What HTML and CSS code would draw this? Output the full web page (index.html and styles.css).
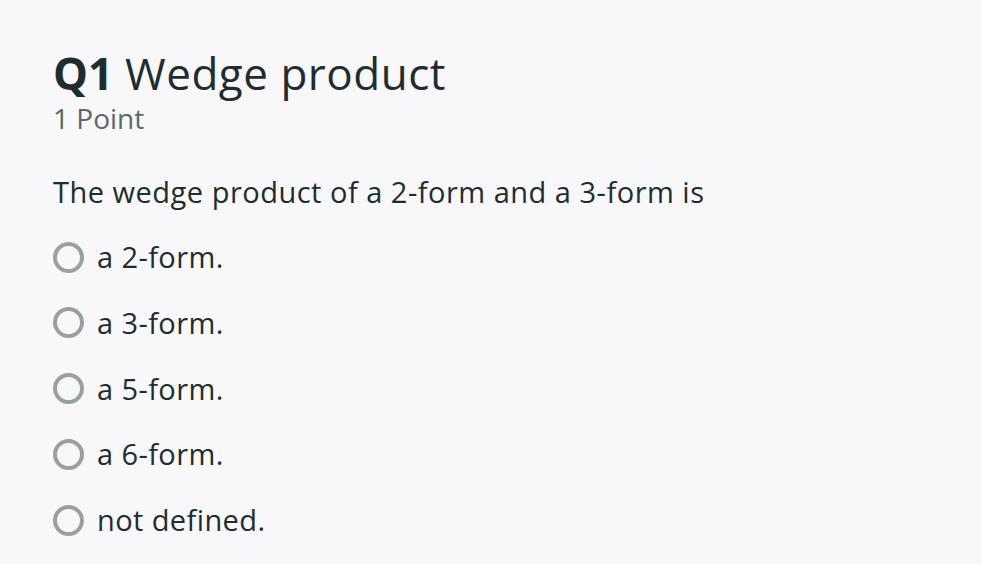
FILE: index.html
```html
<!DOCTYPE html>
<html>
<head>
<meta charset="utf-8">
<link rel="stylesheet" href="styles.css">
</head>
<body>
<main class="question">
  <header class="q-head">
    <h1 class="q-title"><span class="q-num">Q1</span> Wedge product</h1>
    <div class="q-points">1 Point</div>
  </header>
  <p class="q-prompt">The wedge product of a 2-form and a 3-form is</p>
  <ul class="options">
    <li class="option"><span class="radio"></span><span class="label">a 2-form.</span></li>
    <li class="option"><span class="radio"></span><span class="label">a 3-form.</span></li>
    <li class="option"><span class="radio"></span><span class="label">a 5-form.</span></li>
    <li class="option"><span class="radio"></span><span class="label">a 6-form.</span></li>
    <li class="option"><span class="radio"></span><span class="label">not defined.</span></li>
  </ul>
</main>
</body>
</html>
```
FILE: styles.css
```css
html, body {
  margin: 0;
  padding: 0;
  background: #f8f8fa;
}
body {
  font-family: "Open Sans", "Lato", sans-serif;
  color: #1f2d2e;
  font-variant-ligatures: none;
}
.question {
  padding: 46px 0 0 53px;
}
.q-head {
  display: flex;
  flex-direction: column;
}
.q-title {
  margin: 0;
  font-size: 44px;
  line-height: 54px;
  font-weight: 400;
  letter-spacing: 0.5px;
}
.q-num {
  font-weight: 700;
  letter-spacing: 0;
}
.q-points {
  font-size: 28px;
  line-height: 36px;
  color: #5d6769;
}
.q-prompt {
  margin: 36px 0 0;
  font-size: 29px;
  line-height: 40px;
  letter-spacing: 0.5px;
}
.options {
  list-style: none;
  margin: 25px 0 0;
  padding: 0;
  display: flex;
  flex-direction: column;
  gap: 25.75px;
}
.option {
  display: flex;
  align-items: center;
  gap: 13px;
  font-size: 29px;
  line-height: 40px;
  letter-spacing: 0.4px;
}
.radio {
  width: 31px;
  height: 31px;
  box-sizing: border-box;
  border: 4px solid #9aa0a0;
  border-radius: 50%;
  flex: none;
}
```
